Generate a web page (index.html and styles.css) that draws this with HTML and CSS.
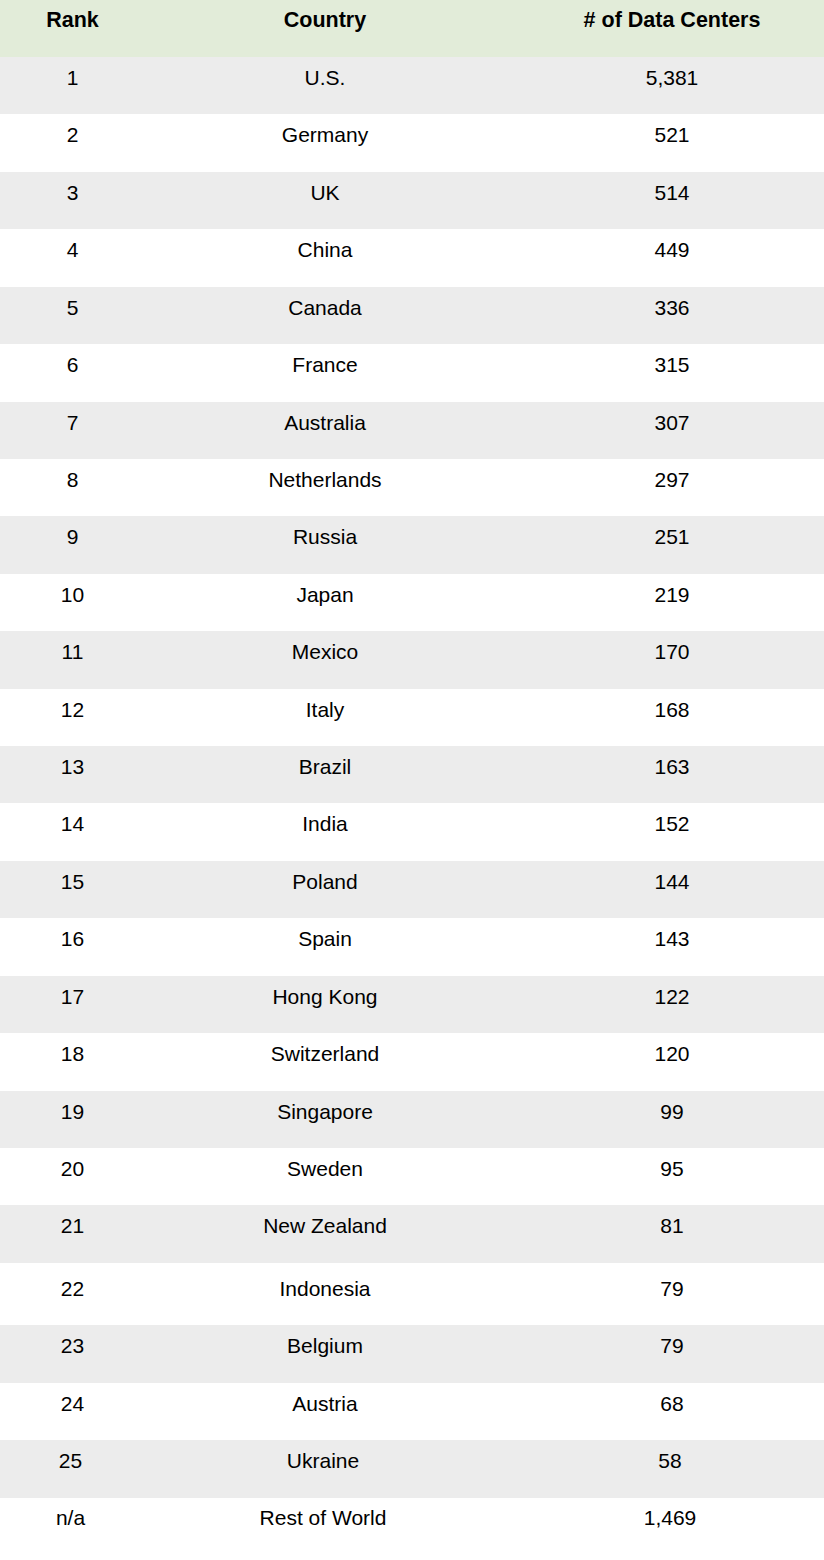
FILE: index.html
```html
<!DOCTYPE html>
<html>
<head>
<meta charset="utf-8">
<link rel="stylesheet" href="styles.css">
</head>
<body>
<div class="table">
  <div class="row head"><div class="c1">Rank</div><div class="c2">Country</div><div class="c3"># of Data Centers</div></div>
  <div class="row grey"><div class="c1">1</div><div class="c2">U.S.</div><div class="c3">5,381</div></div>
  <div class="row"><div class="c1">2</div><div class="c2">Germany</div><div class="c3">521</div></div>
  <div class="row grey"><div class="c1">3</div><div class="c2">UK</div><div class="c3">514</div></div>
  <div class="row"><div class="c1">4</div><div class="c2">China</div><div class="c3">449</div></div>
  <div class="row grey"><div class="c1">5</div><div class="c2">Canada</div><div class="c3">336</div></div>
  <div class="row"><div class="c1">6</div><div class="c2">France</div><div class="c3">315</div></div>
  <div class="row grey"><div class="c1">7</div><div class="c2">Australia</div><div class="c3">307</div></div>
  <div class="row"><div class="c1">8</div><div class="c2">Netherlands</div><div class="c3">297</div></div>
  <div class="row grey"><div class="c1">9</div><div class="c2">Russia</div><div class="c3">251</div></div>
  <div class="row"><div class="c1">10</div><div class="c2">Japan</div><div class="c3">219</div></div>
  <div class="row grey"><div class="c1">11</div><div class="c2">Mexico</div><div class="c3">170</div></div>
  <div class="row"><div class="c1">12</div><div class="c2">Italy</div><div class="c3">168</div></div>
  <div class="row grey"><div class="c1">13</div><div class="c2">Brazil</div><div class="c3">163</div></div>
  <div class="row"><div class="c1">14</div><div class="c2">India</div><div class="c3">152</div></div>
  <div class="row grey"><div class="c1">15</div><div class="c2">Poland</div><div class="c3">144</div></div>
  <div class="row"><div class="c1">16</div><div class="c2">Spain</div><div class="c3">143</div></div>
  <div class="row grey"><div class="c1">17</div><div class="c2">Hong Kong</div><div class="c3">122</div></div>
  <div class="row"><div class="c1">18</div><div class="c2">Switzerland</div><div class="c3">120</div></div>
  <div class="row grey"><div class="c1">19</div><div class="c2">Singapore</div><div class="c3">99</div></div>
  <div class="row"><div class="c1">20</div><div class="c2">Sweden</div><div class="c3">95</div></div>
  <div class="row grey"><div class="c1">21</div><div class="c2">New Zealand</div><div class="c3">81</div></div>
  <div class="row tall"><div class="c1">22</div><div class="c2">Indonesia</div><div class="c3">79</div></div>
  <div class="row grey late"><div class="c1">23</div><div class="c2">Belgium</div><div class="c3">79</div></div>
  <div class="row late"><div class="c1">24</div><div class="c2">Austria</div><div class="c3">68</div></div>
  <div class="row grey late narrow"><div class="c1">25</div><div class="c2">Ukraine</div><div class="c3">58</div></div>
  <div class="row last narrow"><div class="c1">n/a</div><div class="c2">Rest of World</div><div class="c3">1,469</div></div>
</div>
</body>
</html>
```

FILE: styles.css
```css
html, body {
  margin: 0;
  padding: 0;
  background: #ffffff;
}

.table {
  width: 824px;
  height: 1560px;
  overflow: hidden;
  font-family: "Liberation Sans", Arial, sans-serif;
  font-size: 21px;
  color: #000000;
}

.row {
  display: grid;
  grid-template-columns: 145px 360px 1fr;
  height: 57.43px;
  box-sizing: border-box;
  padding-top: 9px;
  line-height: 24px;
  text-align: center;
  background: #ffffff;
}

.row .c3 {
  padding-left: 15px;
}

.head {
  height: 57px;
  background: #e2ecd9;
  font-weight: bold;
  font-size: 21.5px;
  padding-top: 8px;
}

.grey {
  background: #ececec;
}

.tall {
  height: 62px;
  padding-top: 14px;
}

.late {
  height: 57.67px;
}

.narrow .c1,
.narrow .c2,
.narrow .c3 {
  transform: translateX(-2px);
}

.last {
  height: 62px;
  padding-top: 8px;
}
```
